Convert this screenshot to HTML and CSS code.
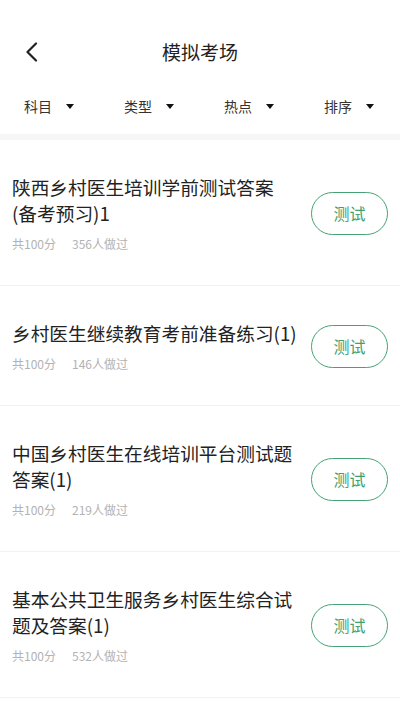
FILE: index.html
```html
<!DOCTYPE html>
<html lang="zh-CN">
<head>
<meta charset="utf-8">
<meta name="viewport" content="width=device-width, initial-scale=1">
<title>模拟考场</title>
<link rel="stylesheet" href="styles.css">
</head>
<body>
<header class="topbar">
  <span class="back">
    <svg width="14" height="20" viewBox="0 0 14 20"><polyline points="11,1.5 2.5,10 11,18.5" fill="none" stroke="#222" stroke-width="2.2" stroke-linecap="round" stroke-linejoin="round"/></svg>
  </span>
  <h1 class="title">模拟考场</h1>
</header>
<nav class="filters">
  <div class="filter"><span>科目</span><i class="caret"></i></div>
  <div class="filter"><span>类型</span><i class="caret"></i></div>
  <div class="filter"><span>热点</span><i class="caret"></i></div>
  <div class="filter"><span>排序</span><i class="caret"></i></div>
</nav>
<div class="band"></div>
<ul class="list">
  <li class="item">
    <div class="info">
      <p class="name">陕西乡村医生培训学前测试答案<span class="keep">(备考预习)1</span></p>
      <p class="meta"><span>共100分</span><span>356人做过</span></p>
    </div>
    <button class="btn">测试</button>
  </li>
  <li class="item">
    <div class="info">
      <p class="name">乡村医生继续教育考前准备练习(1)</p>
      <p class="meta"><span>共100分</span><span>146人做过</span></p>
    </div>
    <button class="btn">测试</button>
  </li>
  <li class="item">
    <div class="info">
      <p class="name">中国乡村医生在线培训平台测试题<span class="keep">答案(1)</span></p>
      <p class="meta"><span>共100分</span><span>219人做过</span></p>
    </div>
    <button class="btn">测试</button>
  </li>
  <li class="item">
    <div class="info">
      <p class="name">基本公共卫生服务乡村医生综合试题及答案(1)</p>
      <p class="meta"><span>共100分</span><span>532人做过</span></p>
    </div>
    <button class="btn">测试</button>
  </li>
</ul>
</body>
</html>
```
FILE: styles.css
```css
* { box-sizing: border-box; }
html, body {
  margin: 0;
  padding: 0;
  background: #fff;
  font-family: "Noto Sans CJK SC", "Noto Sans", sans-serif;
  color: #222;
}
.topbar {
  position: relative;
  height: 78px;
  padding-top: 32px;
}
.back {
  position: absolute;
  left: 25px;
  top: 42px;
  width: 14px;
  height: 20px;
  display: block;
}
.back svg { display: block; }
.title {
  margin: 0;
  height: 40px;
  line-height: 40px;
  text-align: center;
  font-size: 19px;
  font-weight: 400;
  color: #222;
}
.filters {
  display: grid;
  grid-template-columns: repeat(4, 1fr);
  height: 56px;
}
.filter {
  display: flex;
  align-items: center;
  padding-left: 24px;
  gap: 14px;
  font-size: 14px;
  color: #333;
}
.caret {
  display: block;
  width: 0;
  height: 0;
  border-left: 4.5px solid transparent;
  border-right: 4.5px solid transparent;
  border-top: 5px solid #111;
}
.band {
  height: 6px;
  background: #f6f6f6;
}
.list {
  list-style: none;
  margin: 0;
  padding: 0;
}
.item {
  display: flex;
  align-items: center;
  padding: 34px 12px 33px 12px;
  border-bottom: 1px solid #f2f2f2;
}
.info {
  flex: 1;
  min-width: 0;
  padding-right: 12px;
}
.name {
  margin: 0;
  font-size: 18.7px;
  line-height: 26px;
  color: #222;
}
.keep { white-space: nowrap; }
.meta {
  margin: 10px 0 0 0;
  display: flex;
  gap: 16px;
  font-size: 12px;
  line-height: 16px;
  color: #b3b3b3;
}
.btn {
  flex: none;
  width: 77px;
  height: 43px;
  border: 1.5px solid #45a274;
  border-radius: 22px;
  background: #fff;
  color: #3f9f6f;
  font-family: inherit;
  font-size: 16px;
  padding: 0;
}
```
